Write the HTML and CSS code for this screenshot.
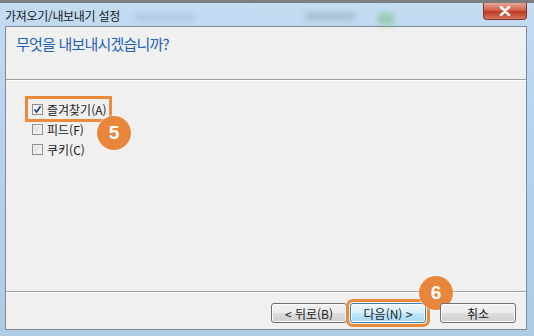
FILE: index.html
```html
<!DOCTYPE html>
<html lang="ko">
<head>
    <meta charset="UTF-8">
    <title>가져오기/내보내기 설정</title>
    <link rel="stylesheet" href="styles.css">
</head>
<body>
    <div class="window">
        <div class="titlebar">
            <span class="title">가져오기/내보내기 설정</span>
            <span class="blur b1"></span>
            <span class="blur b2"></span>
            <span class="blur b3"></span>
            <div class="closebtn">
                <svg width="12" height="10" viewBox="0 0 12 10"><path d="M2 1 L10 9 M10 1 L2 9" stroke="#fff" stroke-width="2.6" stroke-linecap="round"/></svg>
            </div>
        </div>
        <div class="client">
            <div class="header">
                <p class="question">무엇을 내보내시겠습니까?</p>
            </div>
            <div class="sep"></div>
            <div class="content">
                <div class="row marked">
                    <span class="check on">
                        <svg width="9" height="9" viewBox="0 0 9 9"><path d="M1.5 4.5 L3.6 7 L7.6 1.2" stroke="#1d3f8f" stroke-width="1.7" fill="none"/></svg>
                    </span>
                    <span class="label">즐겨찾기(A)</span>
                    <span class="badge badge5">5</span>
                </div>
                <div class="row">
                    <span class="check"></span>
                    <span class="label">피드(F)</span>
                </div>
                <div class="row">
                    <span class="check"></span>
                    <span class="label">쿠키(C)</span>
                </div>
            </div>
            <div class="sep"></div>
            <div class="footer">
                <button class="btn">&lt; 뒤로(B)</button>
                <button class="btn next marked">다음(N) &gt;<span class="badge badge6">6</span></button>
                <button class="btn cancel">취소</button>
            </div>
        </div>
    </div>
</body>
</html>
```

FILE: styles.css
```css
* {
    margin: 0;
    padding: 0;
    box-sizing: border-box;
}

body {
    font-family: "Noto Sans CJK KR", "Noto Sans", sans-serif;
    background: #6f7378;
}

.window {
    width: 534px;
    height: 336px;
    border-top: 3px solid #7b7d80;
    background: linear-gradient(180deg, #c4dcf2 0%, #b6d2ee 40%, #aecbe4 100%);
    display: flex;
    flex-direction: column;
    overflow: hidden;
}

.titlebar {
    height: 23px;
    display: flex;
    align-items: center;
    position: relative;
    padding-left: 5px;
}

.title {
    font-size: 12px;
    color: #1a1a1a;
    letter-spacing: -0.3px;
    margin-top: 1px;
}

.blur {
    position: absolute;
    filter: blur(3px);
    border-radius: 3px;
    opacity: 0.45;
}

.b1 {
    left: 135px;
    top: 12px;
    width: 60px;
    height: 5px;
    background: #8ea5bd;
}

.b2 {
    left: 305px;
    top: 10px;
    width: 50px;
    height: 7px;
    background: #7f93a8;
}

.b3 {
    left: 378px;
    top: 10px;
    width: 16px;
    height: 12px;
    background: #5fb85f;
}

.closebtn {
    position: absolute;
    right: 7px;
    top: 0;
    width: 44px;
    height: 17px;
    border: 1px solid #7e3a32;
    border-top: none;
    border-radius: 0 0 4px 4px;
    background: linear-gradient(180deg, #e8a496 0%, #d5614c 45%, #c03a22 55%, #d8755c 100%);
    display: flex;
    justify-content: center;
    align-items: center;
}

.client {
    flex: 1;
    margin: 0 7px 6px 5px;
    background: #f0f0f0;
    border: 1px solid #7f8a96;
    display: flex;
    flex-direction: column;
}

.header {
    height: 52px;
    padding: 6px 0 0 10px;
}

.question {
    font-size: 15px;
    color: #1e63b8;
    letter-spacing: -0.8px;
}

.sep {
    height: 2px;
    border-top: 1px solid #a0a0a0;
    border-bottom: 1px solid #ffffff;
}

.content {
    flex: 1;
    padding: 18px 0 0 26px;
}

.row {
    display: flex;
    align-items: center;
    height: 20px;
    gap: 4px;
    font-size: 12px;
    color: #1a1a1a;
    position: relative;
    width: max-content;
}

.check {
    width: 11px;
    height: 11px;
    border: 1px solid #8e8f8f;
    background: linear-gradient(135deg, #dcdcdc, #f6f6f6);
    box-shadow: inset 0 0 0 1px #f4f4f4;
    display: flex;
    align-items: center;
    justify-content: center;
}

.check.on {
    background: #f4f6fa;
}

.marked {
    outline: 3px solid #ec8a3c;
    outline-offset: 0;
}

.row.marked {
    outline-offset: 0;
    padding-right: 2px;
    margin-left: -4px;
    padding-left: 4px;
}

.badge {
    position: absolute;
    width: 34px;
    height: 34px;
    border-radius: 50%;
    background: #e8873c;
    color: #fff;
    font-family: "Liberation Sans", Arial, sans-serif;
    font-weight: bold;
    font-size: 19px;
    display: flex;
    align-items: center;
    justify-content: center;
    box-shadow: 0 0 3px rgba(255, 255, 255, 0.9);
}

.badge5 {
    left: 69px;
    top: 17px;
}

.badge6 {
    left: 68px;
    top: -28px;
}

.footer {
    flex: 1;
    max-height: 36px;
    display: flex;
    align-items: flex-start;
    justify-content: flex-end;
    padding: 10px 10px 0 0;
}

.btn {
    width: 76px;
    height: 20px;
    font-family: "Noto Sans CJK KR", "Noto Sans", sans-serif;
    font-size: 12px;
    color: #1a1a1a;
    border: 1px solid #707070;
    border-radius: 3px;
    background: linear-gradient(180deg, #f2f2f2 0%, #ebebeb 50%, #dddddd 51%, #cfcfcf 100%);
    box-shadow: inset 0 0 0 1px #fcfcfc;
    position: relative;
    margin-right: 3px;
}

.next {
    border-color: #3c7fb1;
    background: linear-gradient(180deg, #eaf6fd 0%, #d9f0fc 50%, #bee6fd 51%, #a7d9f5 100%);
    margin-right: 14px;
}

.next.marked {
    outline-offset: 1px;
}

.cancel {
    margin-right: 0;
}
```
